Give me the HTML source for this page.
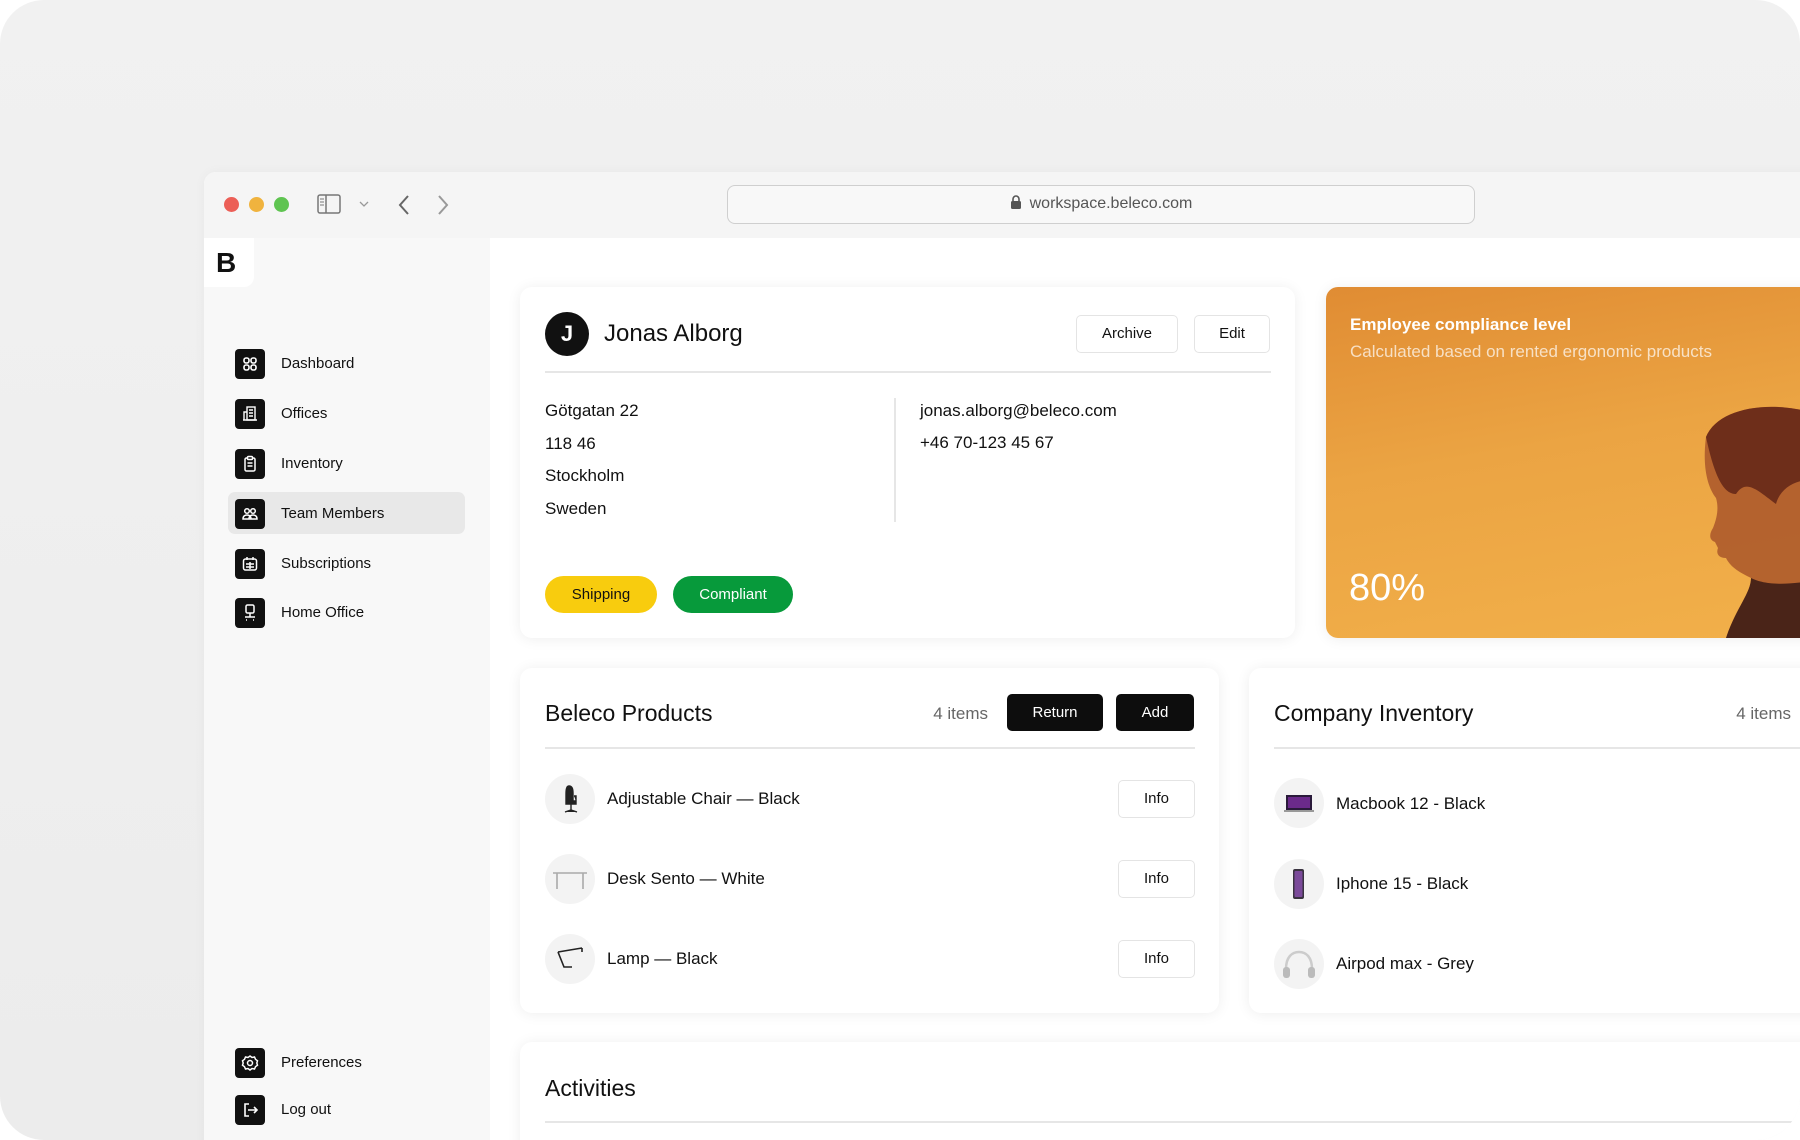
<!DOCTYPE html>
<html><head><meta charset="utf-8"><style>
*{box-sizing:border-box;margin:0;padding:0}
body{width:1800px;height:1140px;background:#fff;font-family:"Liberation Sans",Arial,sans-serif;color:#111;overflow:hidden;position:relative}
.bg{position:absolute;left:0;top:0;width:1800px;height:1140px;border-radius:44px;background:linear-gradient(#f1f1f1,#ececec);overflow:hidden}
.win{position:absolute;left:204px;top:172px;width:1620px;height:1000px;background:#fff;border-radius:12px 0 0 0;overflow:hidden;box-shadow:0 0 12px rgba(0,0,0,.04)}
.tb{position:absolute;left:0;top:0;width:100%;height:66px;background:#f5f5f5}
.dot{position:absolute;top:25px;width:15px;height:15px;border-radius:50%}
.url{position:absolute;left:523px;top:13px;width:748px;height:39px;border:1.5px solid #cfcfcf;border-radius:8px;background:#f8f8f8;font-size:16px;color:#555;text-align:center;line-height:36px}
.side{position:absolute;left:0;top:66px;width:286px;height:940px;background:#f8f8f8}
.logo{position:absolute;left:0;top:0;width:50px;height:49px;background:#fff;border-radius:0 0 10px 0;font-weight:bold;font-size:28px;line-height:49px;padding-left:12px}
.nav{position:absolute;left:31px;height:34px;font-size:15px;line-height:34px}
.nav .ic{position:absolute;left:0;top:2px;width:30px;height:30px;background:#111;border-radius:4px}
.nav span{position:absolute;left:46px;white-space:nowrap}
.act{position:absolute;left:24px;top:254px;width:237px;height:42px;background:#e8e8e8;border-radius:7px}
.card{position:absolute;background:#fff;border-radius:12px;box-shadow:0 1px 14px rgba(0,0,0,.07)}
.btnw{position:absolute;height:38px;border:1.5px solid #e4e4e4;border-radius:5px;background:#fff;font-size:15px;text-align:center;line-height:35px}
.btnb{position:absolute;height:37px;background:#0d0d0d;color:#fff;border-radius:5px;font-size:15px;text-align:center;line-height:37px}
.hline{position:absolute;height:1.5px;background:#e6e6e6}
.t17{position:absolute;font-size:17px;white-space:nowrap}
.th{position:absolute;width:50px;height:50px;border-radius:50%;background:#f3f3f3}
</style></head><body>
<div class="bg">
<div class="win">
  <div class="tb">
    <div class="dot" style="left:20px;background:#ec5f57"></div>
    <div class="dot" style="left:45px;background:#f0b33e"></div>
    <div class="dot" style="left:70px;background:#5fc451"></div>
    <svg style="position:absolute;left:113px;top:22px" width="24" height="20" viewBox="0 0 24 20"><rect x="1" y="1" width="22" height="18" rx="2" fill="none" stroke="#777" stroke-width="1.5"/><line x1="9" y1="1" x2="9" y2="19" stroke="#777" stroke-width="1.5"/><path d="M3 5h4M3 8h4M3 11h4" stroke="#777" stroke-width="1"/></svg>
    <svg style="position:absolute;left:155px;top:28px" width="10" height="8"><path d="M1 2l4 4 4-4" fill="none" stroke="#999" stroke-width="1.3"/></svg>
    <svg style="position:absolute;left:193px;top:22px" width="14" height="22"><path d="M11 2L3 11l8 9" fill="none" stroke="#666" stroke-width="2"/></svg>
    <svg style="position:absolute;left:232px;top:22px" width="14" height="22"><path d="M3 2l8 9-8 9" fill="none" stroke="#999" stroke-width="2"/></svg>
    <div class="url"><svg width="12" height="14" viewBox="0 0 12 14" style="vertical-align:-1px;margin-right:8px"><path d="M3 6V4a3 3 0 016 0v2" fill="none" stroke="#555" stroke-width="1.6"/><rect x="1" y="6" width="10" height="8" rx="1.5" fill="#555"/></svg>workspace.beleco.com</div>
  </div>
  <div class="side">
    <div class="logo">B</div>
    <div class="act"></div>
    <div class="nav" style="top:109px"><div class="ic"><svg width="30" height="30"><g fill="none" stroke="#fff" stroke-width="1.6"><rect x="9" y="9" width="5" height="5" rx="2"/><rect x="16" y="9" width="5" height="5" rx="2"/><rect x="9" y="16" width="5" height="5" rx="2"/><rect x="16" y="16" width="5" height="5" rx="2"/></g></svg></div><span>Dashboard</span></div>
    <div class="nav" style="top:159px"><div class="ic"><svg width="30" height="30"><g fill="none" stroke="#fff" stroke-width="1.4"><rect x="12" y="8" width="8" height="13"/><path d="M9 21V13h3M8 21h14M14 11h4M14 14h4M14 17h4"/></g></svg></div><span>Offices</span></div>
    <div class="nav" style="top:209px"><div class="ic"><svg width="30" height="30"><g fill="none" stroke="#fff" stroke-width="1.5"><rect x="10" y="9" width="10" height="13" rx="1.5"/><rect x="12.5" y="7.5" width="5" height="3" rx="1" fill="#111"/><path d="M12.5 14h5M12.5 17h5"/></g></svg></div><span>Inventory</span></div>
    <div class="nav" style="top:259px"><div class="ic"><svg width="30" height="30"><g fill="none" stroke="#fff" stroke-width="1.5"><circle cx="12" cy="12" r="2.3"/><circle cx="18" cy="12" r="2.3"/><path d="M8 20c0-3 2-4 4-4s4 1 4 4zM14 20c0-3 2-4 4-4s4 1 4 4z"/></g></svg></div><span>Team Members</span></div>
    <div class="nav" style="top:309px"><div class="ic"><svg width="30" height="30"><g fill="none" stroke="#fff" stroke-width="1.5"><rect x="8.5" y="10" width="13" height="11" rx="2"/><path d="M12 8v3M18 8v3M11 15h8M11 18h8M15 13v7"/></g></svg></div><span>Subscriptions</span></div>
    <div class="nav" style="top:358px"><div class="ic"><svg width="30" height="30"><g fill="none" stroke="#fff" stroke-width="1.5"><rect x="11" y="7" width="8" height="8" rx="1.5"/><path d="M15 15v4M10 19h10M11 22h1M18 22h1"/></g></svg></div><span>Home Office</span></div>
    <div class="nav" style="top:808px"><div class="ic"><svg width="30" height="30"><g fill="none" stroke="#fff" stroke-width="1.5"><circle cx="15" cy="15" r="2.5"/><path d="M15 8l2 1.5 2.5-.5 1 2.3 2 1.5-.7 2.2.7 2.2-2 1.5-1 2.3-2.5-.5L15 22l-2-1.5-2.5.5-1-2.3-2-1.5.7-2.2-.7-2.2 2-1.5 1-2.3 2.5.5z"/></g></svg></div><span>Preferences</span></div>
    <div class="nav" style="top:855px"><div class="ic"><svg width="30" height="30"><g fill="none" stroke="#fff" stroke-width="1.6"><path d="M14 9h-4v12h4M13 15h9M19 12l3 3-3 3"/></g></svg></div><span>Log out</span></div>
  </div>
</div>

<div class="card" style="left:520px;top:287px;width:775px;height:351px">
  <div style="position:absolute;left:25px;top:25px;width:44px;height:44px;border-radius:50%;background:#111;color:#fff;font-size:22px;font-weight:bold;text-align:center;line-height:44px">J</div>
  <div style="position:absolute;left:84px;top:33px;font-size:24px">Jonas Alborg</div>
  <div class="btnw" style="left:556px;top:28px;width:102px">Archive</div>
  <div class="btnw" style="left:674px;top:28px;width:76px">Edit</div>
  <div class="hline" style="left:25px;top:84px;width:726px"></div>
  <div class="t17" style="left:25px;top:114px">Götgatan 22</div>
  <div class="t17" style="left:25px;top:147px">118 46</div>
  <div class="t17" style="left:25px;top:179px">Stockholm</div>
  <div class="t17" style="left:25px;top:212px">Sweden</div>
  <div style="position:absolute;left:374px;top:111px;width:1.5px;height:124px;background:#e6e6e6"></div>
  <div class="t17" style="left:400px;top:114px">jonas.alborg@beleco.com</div>
  <div class="t17" style="left:400px;top:146px">+46 70-123 45 67</div>
  <div style="position:absolute;left:25px;top:289px;width:112px;height:37px;border-radius:19px;background:#f8cc0e;font-size:15px;text-align:center;line-height:37px">Shipping</div>
  <div style="position:absolute;left:153px;top:289px;width:120px;height:37px;border-radius:19px;background:#079a3b;color:#fff;font-size:15px;text-align:center;line-height:37px">Compliant</div>
</div>

<div class="card" style="left:1326px;top:287px;width:500px;height:351px;overflow:hidden;background:linear-gradient(170deg,#e08c33 0%,#eba443 45%,#f2b04a 100%)">
  <svg style="position:absolute;left:340px;top:110px" width="160" height="241" viewBox="0 0 160 241">
    <path d="M40 40c10-25 50-35 90-28l30 5v224H60c10-30 25-45 25-60-10-5-20-10-25-20-8 0-10-5-8-10l-3-6c-6-2-6-8-2-14 4-10 6-20 3-30-8-10-14-30-10-61z" fill="#a9562a" opacity=".85"/>
    <path d="M40 40c10-25 50-35 90-28l30 5v70c-20-10-45 0-50 20-20-15-30-25-40-10-10 0-20-10-30-57z" fill="#6e2e1a"/>
    <path d="M85 181c10 5 30 10 75 0v60H60c10-30 25-45 25-60z" fill="#4a2418"/>
  </svg>
  <div style="position:absolute;left:24px;top:28px;color:#fff;font-size:17px;font-weight:bold">Employee compliance level</div>
  <div style="position:absolute;left:24px;top:55px;color:rgba(255,255,255,.7);font-size:17px">Calculated based on rented ergonomic products</div>
  <div style="position:absolute;left:23px;top:280px;color:#fff;font-size:38px">80%</div>
</div>

<div class="card" style="left:520px;top:668px;width:699px;height:345px">
  <div style="position:absolute;left:25px;top:32px;font-size:23px">Beleco Products</div>
  <div style="position:absolute;left:380px;top:36px;width:88px;text-align:right;font-size:17px;color:#666">4 items</div>
  <div class="btnb" style="left:487px;top:26px;width:96px">Return</div>
  <div class="btnb" style="left:596px;top:26px;width:78px">Add</div>
  <div class="hline" style="left:25px;top:79px;width:650px"></div>
  <div class="th" style="left:25px;top:106px"><svg width="50" height="50"><path d="M24 12c3 0 4 3 4 7v8h-7v-6c0-4 0-9 3-9zM21 27h10v3h-10zM26 30v6M20 38l6-2 6 2M29 22h2v5" fill="#222" stroke="#222" stroke-width="1.4"/></svg></div>
  <div class="t17" style="left:87px;top:121px">Adjustable Chair — Black</div>
  <div class="btnw" style="left:598px;top:112px;width:77px">Info</div>
  <div class="th" style="left:25px;top:186px"><svg width="50" height="50"><path d="M8 19h34M12 19v16M38 19v16" fill="none" stroke="#aaa" stroke-width="1.6"/></svg></div>
  <div class="t17" style="left:87px;top:201px">Desk Sento — White</div>
  <div class="btnw" style="left:598px;top:192px;width:77px">Info</div>
  <div class="th" style="left:25px;top:266px"><svg width="50" height="50"><path d="M13 18l24-4M13 18l6 15h8M37 14v4" fill="none" stroke="#222" stroke-width="1.6"/></svg></div>
  <div class="t17" style="left:87px;top:281px">Lamp — Black</div>
  <div class="btnw" style="left:598px;top:272px;width:77px">Info</div>
</div>

<div class="card" style="left:1249px;top:668px;width:580px;height:345px">
  <div style="position:absolute;left:25px;top:32px;font-size:23px">Company Inventory</div>
  <div style="position:absolute;left:440px;top:36px;width:102px;text-align:right;font-size:17px;color:#666">4 items</div>
  <div class="hline" style="left:25px;top:79px;width:560px"></div>
  <div class="th" style="left:25px;top:110px"><svg width="50" height="50"><rect x="12" y="17" width="26" height="15" fill="#2a1a3a"/><rect x="14" y="19" width="22" height="11" fill="#6b2a8a"/><rect x="10" y="32" width="30" height="2" fill="#999"/></svg></div>
  <div class="t17" style="left:87px;top:126px">Macbook 12 - Black</div>
  <div class="th" style="left:25px;top:191px"><svg width="50" height="50"><rect x="19" y="10" width="11" height="30" rx="2" fill="#3a3340"/><rect x="20.5" y="12" width="8" height="26" rx="1" fill="#7b4a9a"/></svg></div>
  <div class="t17" style="left:87px;top:206px">Iphone 15 - Black</div>
  <div class="th" style="left:25px;top:271px"><svg width="50" height="50"><path d="M12 30c0-12 6-17 13-17s13 5 13 17" fill="none" stroke="#ccc" stroke-width="2.5"/><rect x="9" y="28" width="7" height="11" rx="3" fill="#bbb"/><rect x="34" y="28" width="7" height="11" rx="3" fill="#bbb"/></svg></div>
  <div class="t17" style="left:87px;top:286px">Airpod max - Grey</div>
</div>

<div class="card" style="left:520px;top:1042px;width:1320px;height:140px">
  <div style="position:absolute;left:25px;top:33px;font-size:23px">Activities</div>
  <div class="hline" style="left:25px;top:79px;width:1300px"></div>
</div>
</div>
</body></html>
